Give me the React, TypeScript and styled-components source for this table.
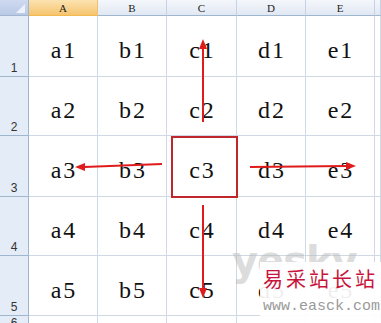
import { Fragment } from "react"
import styled, { createGlobalStyle } from "styled-components"

const GlobalStyle = createGlobalStyle`
  html, body {
    margin: 0;
    padding: 0;
    background: #ffffff;
    overflow: hidden;
  }
`

const Sheet = styled.div`
  position: relative;
  width: 381px;
  height: 323px;
  overflow: hidden;
  display: grid;
  grid-template-columns: 29px 69px 69px 70px 69px 69px 1fr;
  grid-template-rows: 16px 61px 59px 61px 59px 60px 1fr;
  background: #ffffff;
`

const Corner = styled.div`
  position: relative;
  box-sizing: border-box;
  background: linear-gradient(#cfdaf0, #b9c9e6);
  border-right: 1px solid #9eb6ce;
  border-bottom: 1px solid #9eb6ce;

  &::after {
    content: "";
    position: absolute;
    right: 3px;
    bottom: 2px;
    width: 0;
    height: 0;
    border-left: 9px solid transparent;
    border-bottom: 9px solid #eef2f9;
  }
`

const ColHeader = styled.div<{ $active?: boolean }>`
  box-sizing: border-box;
  display: flex;
  align-items: center;
  justify-content: center;
  font-family: "Liberation Serif", serif;
  font-size: 11px;
  color: #222;
  background: ${(p) =>
    p.$active
      ? "linear-gradient(#fbe3b1, #f6c46e)"
      : "linear-gradient(#f4f7fb, #e1e8f3)"};
  border-right: 1px solid ${(p) => (p.$active ? "#f0c070" : "#c6d2e3")};
  border-bottom: 1px solid ${(p) => (p.$active ? "#f2b950" : "#9eb6ce")};
`

const RowHeader = styled.div`
  box-sizing: border-box;
  display: flex;
  align-items: flex-end;
  justify-content: center;
  padding-bottom: 1px;
  font-family: "Liberation Sans", sans-serif;
  font-size: 12px;
  color: #333;
  background: #e4ecf7;
  border-right: 1px solid #9eb6ce;
  border-bottom: 1px solid #9eb6ce;
`

const Cell = styled.div`
  box-sizing: border-box;
  display: flex;
  align-items: center;
  justify-content: center;
  padding-top: 9px;
  font-family: "Liberation Serif", serif;
  font-size: 24px;
  letter-spacing: 2px;
  text-indent: 2px;
  color: #111;
  border-right: 1px solid #d0d7e5;
  border-bottom: 1px solid #d0d7e5;
`

const Overlay = styled.svg`
  position: absolute;
  left: 0;
  top: 0;
  pointer-events: none;
`

const Logo = styled.div`
  position: absolute;
  left: 232px;
  top: 238px;
  font-family: "DejaVu Sans", sans-serif;
  font-weight: bold;
  font-size: 40px;
  letter-spacing: -1px;
  color: rgba(185, 185, 185, 0.5);
`

const Stamp = styled.div`
  position: absolute;
  left: 260px;
  top: 262px;
  width: 121px;
  height: 61px;
  display: flex;
  flex-direction: column;
  gap: 9px;
  padding: 5px 0 0 3px;
  box-sizing: border-box;
  white-space: nowrap;
  background: rgba(255, 255, 255, 0.93);
`

const StampTitle = styled.div`
  font-family: "Noto Sans CJK SC", sans-serif;
  font-size: 20px;
  line-height: 24px;
  letter-spacing: 3px;
  color: #c8143c;
`

const StampUrl = styled.div`
  font-family: "Liberation Mono", monospace;
  font-size: 15px;
  line-height: 14px;
  color: #9a9a9a;
`

const cols = ["A", "B", "C", "D", "E", ""]
const rows = [1, 2, 3, 4, 5, 6]

export default function App() {
  return (
    <>
      <GlobalStyle />
      <Sheet>
        <Corner />
        {cols.map((c, i) => (
          <ColHeader key={i} $active={c === "A"}>
            {c}
          </ColHeader>
        ))}
        {rows.map((r) => (
          <Fragment key={r}>
            <RowHeader>{r}</RowHeader>
            {cols.map((c, i) => (
              <Cell key={i}>{c && r < 6 ? c.toLowerCase() + r : ""}</Cell>
            ))}
          </Fragment>
        ))}

        <Logo>yesky</Logo>
        <Stamp>
          <StampTitle>易采站长站</StampTitle>
          <StampUrl>www.easck.com</StampUrl>
        </Stamp>

        <Overlay width="381" height="323" viewBox="0 0 381 323">
          <rect x="172" y="137" width="65" height="60" fill="none" stroke="#c0272d" strokeWidth="2" />
          <g stroke="#e01b1b" strokeWidth="2" fill="#e01b1b">
            <line x1="203" y1="122" x2="203" y2="47" />
            <polygon points="203,39 199,49 207,49" stroke="none" />
            <line x1="162" y1="164" x2="84" y2="167" />
            <polygon points="75,167 85,163 85,171" stroke="none" />
            <line x1="250" y1="167" x2="347" y2="166" />
            <polygon points="356,166 346,162 346,170" stroke="none" />
            <line x1="203" y1="205" x2="203" y2="289" />
            <polygon points="203,298 199,288 207,288" stroke="none" />
          </g>
        </Overlay>
      </Sheet>
    </>
  )
}
